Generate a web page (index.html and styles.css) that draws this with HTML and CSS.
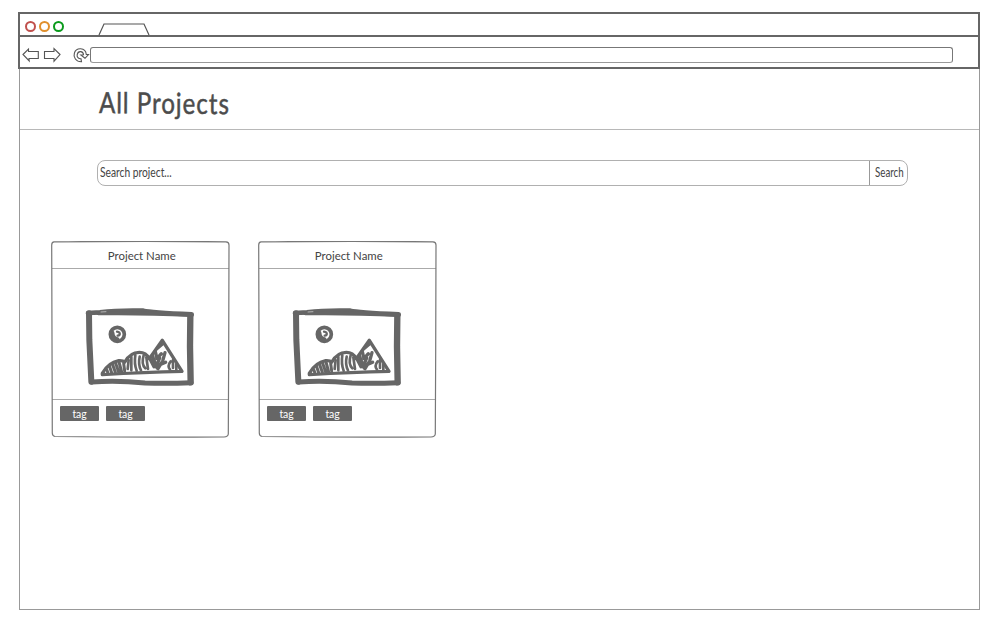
FILE: index.html
```html
<!DOCTYPE html>
<html lang="en">
<head>
<meta charset="utf-8">
<title>All Projects</title>
<link rel="stylesheet" href="styles.css">
</head>
<body>
<svg class="defs" width="0" height="0" aria-hidden="true">
  <symbol id="picture" viewBox="0 0 390 285">
    <g fill="none" stroke="#666" stroke-linecap="round" stroke-linejoin="round">
      <path stroke-width="18" d="M42 40 L43 120 L49 245"/>
      <path stroke-width="15" d="M50 246 Q130 241 210 249 Q280 251 348 248"/>
      <path stroke-width="19" d="M346 47 L345 140 L347 247"/>
      <path stroke-width="14" d="M39 39 L75 37 Q130 30 205 32 Q225 37 350 43"/>
      <path stroke-width="12" d="M70 40 Q200 38 350 45"/>
      <circle stroke-width="11" cx="127" cy="103" r="21"/>
      <path stroke-width="13" d="M112 99 Q112 115 127 118"/>
      <path stroke-width="7" d="M126 95 Q136 96 134 104 Q132 107 128 107"/>
      <path stroke-width="10" d="M82 220 Q100 188 131 182 Q144 181 149 187 Q165 157 193 157 Q213 157 223 176 L262 121 L321 214 Q210 216 82 224 Z"/>
      <path stroke-width="9" d="M96 211 L98 217 M103 197 L110 218 M112 191 L121 217 M121 187 L131 216 M132 186 L140 216 M146 190 L149 213"/>
      <path stroke-width="8" d="M161 180 L158 207 M169 170 L169 211 M181 165 Q177 192 185 212 M194 170 Q189 193 198 211 M206 166 Q198 192 211 205 M214 172 L219 207"/>
      <path stroke-width="10" d="M225 177 L237 200 M232 167 L246 204 M241 155 L246 176 L259 161 M254 174 L244 199 L272 187 M270 158 L263 183 L249 206"/>
      <path stroke-width="8" d="M246 147 L263 133 M287 184 Q276 198 285 209 M294 180 L294 204 M304 193 L304 212"/>
    </g>
    <path d="M77 36 L94 35" stroke="#ddd" stroke-width="2"/>
  </symbol>
  <symbol id="frame" viewBox="0 0 179 197">
    <path d="M3 .9 Q90 -.2 175 .8 Q178 1 178 4 L177.7 110 L177.3 193 Q177 195.8 173 196 Q85 196.6 4 195.5 Q1.3 195 1.3 192 L.7 4 Q.8 1 3 .9Z" fill="none" stroke="#777" stroke-width="1.2"/>
  </symbol>
</svg>
<div class="browser">
  <div class="tabs">
    <i class="dot red"></i><i class="dot orange"></i><i class="dot green"></i>
    <svg class="tab" width="52" height="13" viewBox="0 0 52 13"><path d="M1 12 L6 1 H46 L51 12" fill="none" stroke="#555" stroke-width="1.2"/></svg>
  </div>
  <div class="toolbar">
    <svg width="70" height="18" viewBox="0 0 70 18" fill="none" stroke="#555" stroke-width="1.1">
      <path d="M2 8.5 L7.5 3 V5.5 H17.3 V12.5 H8 L8.2 15 Z"/>
      <path d="M39 8.5 L33 2.5 V5.5 H23.5 V12.5 H33 V15.2 Z"/>
      <path d="M60.5 15.8 C55 16 52 11 53.4 7 C55 1.5 64.5 .8 65.3 8.5 H67.5 L64 12.3 L59.8 9 L62.5 8.8 C62.3 4.8 57 4.3 56.2 8.6 C55.6 11 57.5 13 60 12.8 Z"/>
    </svg>
    <div class="address"></div>
  </div>
  <header><h1><span>All Projects</span></h1></header>
  <main>
    <form class="search">
      <div class="query"><span>Search project...</span></div>
      <div class="submit"><span>Search</span></div>
    </form>
    <div class="cards">
      <article class="card">
        <svg class="outline"><use href="#frame"/></svg>
        <h2><span>Project Name</span></h2>
        <div class="image"><svg width="130" height="95"><use href="#picture"/></svg></div>
        <div class="tags"><b><span>tag</span></b><b><span>tag</span></b></div>
      </article>
      <article class="card">
        <svg class="outline"><use href="#frame"/></svg>
        <h2><span>Project Name</span></h2>
        <div class="image"><svg width="130" height="95"><use href="#picture"/></svg></div>
        <div class="tags"><b><span>tag</span></b><b><span>tag</span></b></div>
      </article>
    </div>
  </main>
</div>
</body>
</html>
```
FILE: styles.css
```css
* { box-sizing: border-box; }
body {
  margin: 0;
  padding: 12px 16px 0 19px;
  background: #fff;
  color: #444;
  font-family: Lato, "Open Sans", sans-serif;
}
.defs { position: absolute; }
h1, h2 { margin: 0; font-weight: 400; }
h1 span, h2 span, .search span, .tags span {
  display: inline-block;
  white-space: nowrap;
  transform-origin: left center;
}
.browser { width: 961px; height: 598px; border: 1px solid #999; border-top: 0; }
.tabs {
  display: flex;
  align-items: center;
  height: 25px;
  margin: 0 -1px 0 -2px;
  padding-left: 5px;
  border: 2px solid #666;
}
.dot { width: 11px; height: 11px; margin: 4px 3px 0 0; border: 2px solid; border-radius: 50%; }
.red { border-color: #c0504d; }
.orange { border-color: #e08f2c; }
.green { border-color: #0a9a1c; }
.tab { margin: 10px 0 0 31px; }
.toolbar {
  display: flex;
  align-items: center;
  height: 32px;
  margin: 0 -1px 0 -2px;
  padding: 5px 25px 0 1px;
  border: 2px solid #666;
  border-top: 0;
}
.address {
  flex: 1;
  height: 16px;
  margin-left: -1px;
  border: 1px solid #777;
  border-bottom-color: #999;
  border-radius: 3px;
}
header { height: 61px; padding: 13px 0 0 79px; border-bottom: 1px solid #b8b8b8; }
h1 { font-size: 29px; line-height: 40px; letter-spacing: 1.2px; color: #4c4c4c; -webkit-text-stroke: .5px #4c4c4c; }
h1 span { transform: scaleX(.83) rotate(.4deg); }
.search {
  display: flex;
  width: 811px;
  height: 26px;
  margin: 30px 0 0 77px;
  border: 1px solid #b0b0b0;
  border-radius: 8px;
  font-size: 12.5px;
  line-height: 23px;
}
.query { flex: 1; padding-left: 2px; }
.query span { transform: scaleX(.82); }
.submit { width: 38px; padding-left: 5px; border-left: 1px solid #999; }
.submit span { transform: scaleX(.78); }
.cards { display: flex; gap: 28px; margin: 55px 0 0 31px; }
.card { position: relative; width: 179px; height: 197px; }
.outline { position: absolute; inset: 0; width: 179px; height: 197px; }
h2 {
  height: 28px;
  margin: 0 1px;
  border-bottom: 1px solid #aaa;
  font-size: 12px;
  line-height: 29px;
  text-align: center;
}
h2 span { transform: translateX(1px) scaleX(.95); transform-origin: center; }
.image {
  display: flex;
  justify-content: center;
  height: 131px;
  margin: 0 1px;
  padding: 31px 2px 0 0;
  border-bottom: 1px solid #aaa;
}
.tags { display: flex; gap: 7px; padding: 6px 0 0 9px; }
.tags b {
  width: 39px;
  height: 15px;
  background: #666;
  border-radius: 1px;
  color: #fff;
  font-size: 11px;
  font-weight: 400;
  line-height: 15px;
  text-align: center;
}
.tags span { transform: scaleX(.95); transform-origin: center; }
```
